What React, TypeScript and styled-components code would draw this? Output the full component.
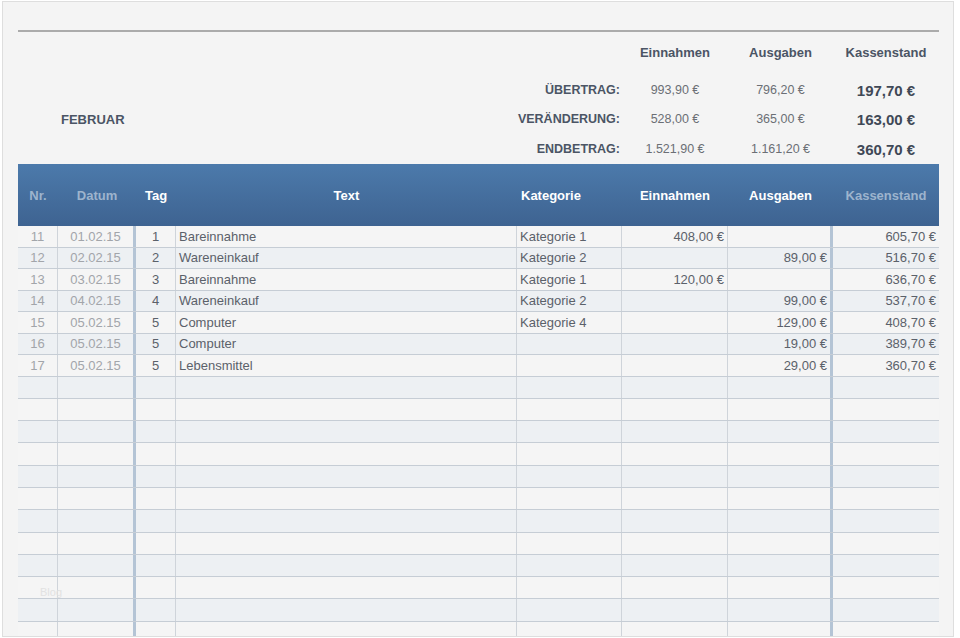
import styled, { createGlobalStyle } from "styled-components";

const GlobalStyle = createGlobalStyle`
    body {
        margin: 0;
        background: #ffffff;
        font-family: "Liberation Sans", Arial, sans-serif;
    }
`

const GRID = "40px 78px 40px 341px 105px 106px 105px 106px";

const Frame = styled.div`
    position: relative;
    box-sizing: border-box;
    width: 952px;
    height: 636px;
    margin: 1px 0 0 2px;
    padding-left: 15px;
    border: 1px solid #dedede;
    background: #f4f4f4;
    overflow: hidden;
`

const TopRule = styled.div`
    width: 921px;
    height: 2px;
    margin-top: 28px;
    background: #ababab;
`

const Summary = styled.div`
    display: grid;
    grid-template-columns: 1fr 106px 105px 106px;
    grid-template-rows: 44px 28px 30px 30px;
    width: 921px;
`

const ColHead = styled.div`
    display: flex;
    align-items: center;
    justify-content: center;
    padding-bottom: 4px;
    color: #4b5565;
    font-size: 13px;
    font-weight: 700;
`

const LabelCell = styled.div`
    display: flex;
    align-items: center;
    justify-content: space-between;
    padding-right: 2px;
    color: #4b5565;
    font-size: 12.5px;
    font-weight: 700;

    .summary__month {
        padding-left: 43px;
        font-size: 13px;
    }
`

const ValueCell = styled.div<{ $strong?: boolean }>`
    display: flex;
    align-items: center;
    justify-content: center;
    color: ${(p) => (p.$strong ? "#3f4856" : "#6b6f75")};
    font-size: ${(p) => (p.$strong ? "15px" : "12.5px")};
    font-weight: ${(p) => (p.$strong ? 700 : 400)};
`

const HeadRow = styled.div`
    display: grid;
    grid-template-columns: ${GRID};
    width: 921px;
    height: 62px;
    background: linear-gradient(#4c7aab, #3e6391);
`

const HeadCell = styled.div<{ $muted?: boolean; $left?: boolean }>`
    display: flex;
    align-items: center;
    justify-content: ${(p) => (p.$left ? "flex-start" : "center")};
    padding-left: ${(p) => (p.$left ? "4px" : "0")};
    color: ${(p) => (p.$muted ? "#9db4cd" : "#ffffff")};
    font-size: 13px;
    font-weight: 700;
`

const Row = styled.div<{ $alt: boolean; $empty?: boolean }>`
    display: grid;
    grid-template-columns: ${GRID};
    width: 921px;
    height: ${(p) => (p.$empty ? "22.3px" : "21.5px")};
    box-sizing: border-box;
    border-bottom: 1px solid #c6cdd5;
    background: ${(p) => (p.$alt ? "#edf0f3" : "#f5f5f5")};
`

type Align = "left" | "center" | "right";

const Cell = styled.div<{ $align: Align; $muted?: boolean; $thick?: boolean; $last?: boolean }>`
    display: flex;
    align-items: center;
    justify-content: ${(p) => (p.$align === "left" ? "flex-start" : p.$align === "right" ? "flex-end" : "center")};
    box-sizing: border-box;
    padding: 0 3px;
    overflow: hidden;
    white-space: nowrap;
    border-right: ${(p) => (p.$last ? "none" : p.$thick ? "3px solid #b4c4d5" : "1px solid #cfd4da")};
    color: ${(p) => (p.$muted ? "#a2a5aa" : "#5b616a")};
    font-size: 13px;
`

const Watermark = styled.span`
    position: absolute;
    left: 37px;
    top: 584px;
    color: #e2e2e2;
    font-size: 11px;
`

const columns: { title: string; align: Align; muted?: boolean; thick?: boolean }[] = [
    { title: "Nr.", align: "center", muted: true },
    { title: "Datum", align: "center", muted: true, thick: true },
    { title: "Tag", align: "center" },
    { title: "Text", align: "left" },
    { title: "Kategorie", align: "left" },
    { title: "Einnahmen", align: "right" },
    { title: "Ausgaben", align: "right", thick: true },
    { title: "Kassenstand", align: "right" },
];

const headMuted = [true, true, false, false, false, false, false, true];

const entries = [
    ["11", "01.02.15", "1", "Bareinnahme", "Kategorie 1", "408,00 €", "", "605,70 €"],
    ["12", "02.02.15", "2", "Wareneinkauf", "Kategorie 2", "", "89,00 €", "516,70 €"],
    ["13", "03.02.15", "3", "Bareinnahme", "Kategorie 1", "120,00 €", "", "636,70 €"],
    ["14", "04.02.15", "4", "Wareneinkauf", "Kategorie 2", "", "99,00 €", "537,70 €"],
    ["15", "05.02.15", "5", "Computer", "Kategorie 4", "", "129,00 €", "408,70 €"],
    ["16", "05.02.15", "5", "Computer", "", "", "19,00 €", "389,70 €"],
    ["17", "05.02.15", "5", "Lebensmittel", "", "", "29,00 €", "360,70 €"],
];

const emptyRows = Array.from({ length: 12 }, () => ["", "", "", "", "", "", "", ""]);

const summary = [
    { label: "ÜBERTRAG:", income: "993,90 €", expense: "796,20 €", balance: "197,70 €" },
    { label: "VERÄNDERUNG:", income: "528,00 €", expense: "365,00 €", balance: "163,00 €", month: "FEBRUAR" },
    { label: "ENDBETRAG:", income: "1.521,90 €", expense: "1.161,20 €", balance: "360,70 €" },
];

export default function App() {
    const rows = [...entries, ...emptyRows];

    return (
        <>
            <GlobalStyle />
            <Frame>
                <TopRule />
                <Summary>
                    <div />
                    <ColHead>Einnahmen</ColHead>
                    <ColHead>Ausgaben</ColHead>
                    <ColHead>Kassenstand</ColHead>
                    {summary.map((s) => [
                        <LabelCell key={s.label}>
                            <span className="summary__month">{s.month}</span>
                            <span>{s.label}</span>
                        </LabelCell>,
                        <ValueCell key={s.label + "i"}>{s.income}</ValueCell>,
                        <ValueCell key={s.label + "e"}>{s.expense}</ValueCell>,
                        <ValueCell key={s.label + "b"} $strong>{s.balance}</ValueCell>,
                    ])}
                </Summary>
                <HeadRow>
                    {columns.map((c, i) => (
                        <HeadCell key={c.title} $muted={headMuted[i]} $left={c.title === "Kategorie"}>
                            {c.title}
                        </HeadCell>
                    ))}
                </HeadRow>
                {rows.map((r, i) => (
                    <Row key={i} $alt={i % 2 === 1} $empty={i >= entries.length}>
                        {columns.map((c, j) => (
                            <Cell
                                key={c.title}
                                $align={c.align}
                                $muted={c.muted}
                                $thick={c.thick}
                                $last={j === columns.length - 1}
                            >
                                {r[j]}
                            </Cell>
                        ))}
                    </Row>
                ))}
                <Watermark>Blog</Watermark>
            </Frame>
        </>
    );
}
